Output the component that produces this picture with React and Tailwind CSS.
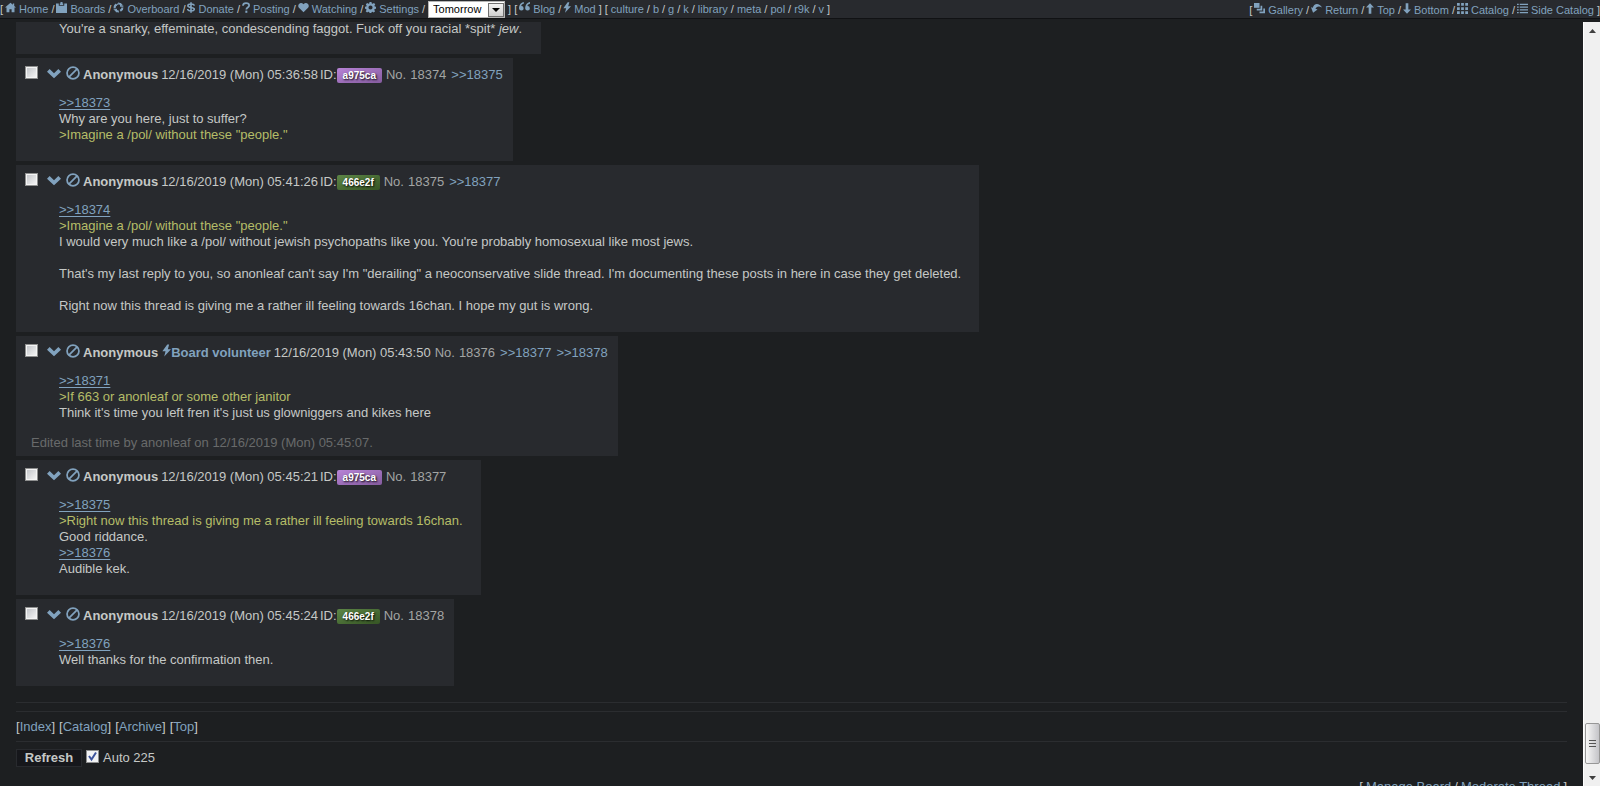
import React, { useState } from 'react';

const ICONS = {
  home: <path d="M8 1 0 8h2.200v7h4.200v-4.600h3.200V15h4.200V8H16l-2.600-2.300V2h-2v2z" />,
  boards: <path d="M0 2h4v3.500h8V2h4v14H0zM5.500 2h1V0h3v2h1v2.300h-5z" />,
  overboard: (
    <g fill="none" stroke="currentColor" strokeWidth="3">
      <path d="M2.500 9A5.600 5.600 0 0 1 5 3.300M7.500 2.300a5.600 5.600 0 0 1 5.300 2.900M13.700 8a5.600 5.600 0 0 1-3 5M8.500 13.800A5.600 5.600 0 0 1 3 11" />
      <path d="m3.500 6 4-3.500M11 1.500v4.500h4M14.500 10.500 10 12M5 15v-4.500H1" strokeWidth="1.500" />
    </g>
  ),
  donate: (
    <g fill="none" stroke="currentColor" strokeWidth="2.400">
      <path d="M13 5.200C12.600 3.500 10.800 2.700 8 2.700c-3 0-4.700 1-4.700 2.700C3.300 9.200 13 6.700 13 10.600c0 1.800-1.900 2.700-4.900 2.700-3.200 0-5-1-5.300-3M8 0v16" />
    </g>
  ),
  posting: (
    <>
      <path d="M3.500 5.200C3.500 2.800 5 1.500 8 1.500s4.700 1.400 4.700 3.500c0 3-4.200 2.900-4.200 6" fill="none" stroke="currentColor" strokeWidth="2.600" />
      <path d="M7 12.700h3V16H7z" />
    </>
  ),
  watching: <path d="M8 15 1.400 8.400C-2 4.500 3.500-1.500 8 3.200c4.500-4.700 10 1.300 6.600 5.200z" />,
  settings: (
    <path
      fillRule="evenodd"
      d="M6.600 0h2.800l.5 2.200 1.200.5L13 1.400l1.900 2-1.200 1.900.5 1.200 1.800.5v2.800l-2 .5-.5 1.200 1.200 1.800-2 2-1.800-1.200-1.200.5-.5 1.400H6.600l-.5-1.400-1.300-.5L3 15.300l-2-2 1.200-1.800-.5-1.200L0 9.800V7l1.900-.5.5-1.200L1.200 3.400l2-2L5 2.700l1.200-.5zM8 5a3 3 0 1 0 0 6 3 3 0 0 0 0-6z"
    />
  ),
  quote: (
    <path d="M7 0C3 .5 0 4 0 9.500a3.400 3.400 0 1 0 3.300-3.800C3.500 4 5 3 7 2.700zM16 0c-4 .5-7 4-7 9.500a3.400 3.400 0 1 0 3.300-3.800C12.500 4 14 3 16 2.700z" />
  ),
  bolt: <path d="M9 0 2.500 9h4.200L5 16l9-9.800H9.800L11.500 0z" />,
  gallery: (
    <>
      <path d="M0 0h8v7H0z" />
      <path d="M9.500 4H12v7H4V8.500h5.500zM13.500 8H16v7H8v-2.500h5.500z" />
    </>
  ),
  back: <path d="M0 6l3 8 6.500-4.500-3-1C7.500 5.500 11 3.500 16 6.500 12.500-.5 4-.5 2.600 6.800z" />,
  up: <path d="m8 0 6 6.500h-4V16H6V6.500H2z" />,
  down: <path d="m8 16 6-6.500h-4V0H6v9.500H2z" />,
  grid: <path d="M0 0h4v4H0zM6 0h4v4H6zM12 0h4v4h-4zM0 6h4v4H0zM6 6h4v4H6zM12 6h4v4h-4zM0 12h4v4H0zM6 12h4v4H6zM12 12h4v4h-4z" />,
  list: <path d="M0 1h2.500v2H0zM4 1h12v2H4zM0 5h2.500v2H0zM4 5h12v2H4zM0 9h2.500v2H0zM4 9h12v2H4zM0 13h2.500v2H0zM4 13h12v2H4z" />,
  menu: <path d="M0 6.500 3 3.500l5 4.700 5-4.700 3 3-8 7.500z" />,
  ban: (
    <g fill="none" stroke="currentColor" strokeWidth="2">
      <circle cx="8" cy="8" r="6.800" />
      <path d="M3.300 12.700 12.700 3.300" />
    </g>
  ),
};

// Narrow glyphs drop the empty columns on both sides
const NARROW = ['donate', 'posting', 'bolt', 'up', 'down'];

const Icon = ({ name, className }) => (
  <svg
    viewBox={NARROW.includes(name) ? '2 0 12 16' : '0 0 16 16'}
    fill="currentColor"
    aria-hidden="true"
    className={`shrink-0 text-[#81a2be] ${className}`}
  >
    {ICONS[name]}
  </svg>
);

const SITE_LINKS = [
  { icon: 'home', label: 'Home' },
  { icon: 'boards', label: 'Boards' },
  { icon: 'overboard', label: 'Overboard' },
  { icon: 'donate', label: 'Donate' },
  { icon: 'posting', label: 'Posting' },
  { icon: 'watching', label: 'Watching' },
  { icon: 'settings', label: 'Settings' },
];

const STAFF_LINKS = [
  { icon: 'quote', label: 'Blog' },
  { icon: 'bolt', label: 'Mod' },
];

const BOARD_LINKS = ['culture', 'b', 'g', 'k', 'library', 'meta', 'pol', 'r9k', 'v'].map((label) => ({ label }));

const THREAD_LINKS = [
  { icon: 'gallery', label: 'Gallery' },
  { icon: 'back', label: 'Return' },
  { icon: 'up', label: 'Top' },
  { icon: 'down', label: 'Bottom' },
  { icon: 'grid', label: 'Catalog' },
  { icon: 'list', label: 'Side Catalog' },
];

const LinkGroup = ({ links }) => (
  <>
    {links.map((link, i) => (
      <React.Fragment key={link.label}>
        {i > 0 && <span>/</span>}
        <a href="#" className={`flex items-center gap-[3px] text-[#81a2be] ${link.icon ? '-ml-px' : ''}`}>
          {link.icon && (
            <Icon name={link.icon} className={`-mt-[3px] h-[11px] ${NARROW.includes(link.icon) ? 'w-[8px]' : 'w-[11px]'}`} />
          )}
          {link.label}
        </a>
      </React.Fragment>
    ))}
  </>
);

const TopBar = () => (
  <header className="flex h-[19px] shrink-0 items-center justify-between border-b border-[#111214] bg-[#282a2e] text-[11px] whitespace-nowrap">
    <nav className="flex items-center gap-[3px]">
      <span>[</span>
      <LinkGroup links={SITE_LINKS} />
      <span>/</span>
      <span className="relative flex">
        <select
          aria-label="Theme"
          defaultValue="Tomorrow"
          className="h-[17px] w-[77px] appearance-none border border-[#b5b5b5] bg-white pl-[4px] text-[11px] leading-[14px] text-black"
        >
          <option>Tomorrow</option>
        </select>
        <span className="pointer-events-none absolute top-[2px] right-[1px] flex h-[14px] w-[16px] items-center justify-center border border-[#707070] bg-linear-to-b from-[#f2f2f2] to-[#cfcfcf]">
          <svg viewBox="0 0 8 4" className="h-[4px] w-[8px]" aria-hidden="true">
            <path d="M0 0h8L4 4z" />
          </svg>
        </span>
      </span>
      <span>]</span>
      <span>[</span>
      <LinkGroup links={STAFF_LINKS} />
      <span>]</span>
      <span>[</span>
      <LinkGroup links={BOARD_LINKS} />
      <span>]</span>
    </nav>
    <nav className="flex items-center gap-[3px] pt-[2px]">
      <span>[</span>
      <LinkGroup links={THREAD_LINKS} />
      <span>]</span>
    </nav>
  </header>
);

const ID_STYLES = {
  a975ca: 'from-[#b783d6] to-[#855c9f]',
  '466e2f': 'from-[#5d8647] to-[#365524]',
};

const POSTS = [
  {
    no: 18374,
    time: '12/16/2019 (Mon) 05:36:58',
    id: 'a975ca',
    replies: [18375],
    lines: [
      { quote: 18373 },
      { text: 'Why are you here, just to suffer?' },
      { green: '>Imagine a /pol/ without these "people."' },
    ],
  },
  {
    no: 18375,
    time: '12/16/2019 (Mon) 05:41:26',
    id: '466e2f',
    replies: [18377],
    lines: [
      { quote: 18374 },
      { green: '>Imagine a /pol/ without these "people."' },
      { text: "I would very much like a /pol/ without jewish psychopaths like you. You're probably homosexual like most jews." },
      {},
      { text: 'That\'s my last reply to you, so anonleaf can\'t say I\'m "derailing" a neoconservative slide thread. I\'m documenting these posts in here in case they get deleted.' },
      {},
      { text: 'Right now this thread is giving me a rather ill feeling towards 16chan. I hope my gut is wrong.' },
    ],
  },
  {
    no: 18376,
    time: '12/16/2019 (Mon) 05:43:50',
    role: 'Board volunteer',
    replies: [18377, 18378],
    lines: [
      { quote: 18371 },
      { green: '>If 663 or anonleaf or some other janitor' },
      { text: "Think it's time you left fren it's just us glowniggers and kikes here" },
    ],
    edited: 'Edited last time by anonleaf on 12/16/2019 (Mon) 05:45:07.',
  },
  {
    no: 18377,
    time: '12/16/2019 (Mon) 05:45:21',
    id: 'a975ca',
    replies: [],
    lines: [
      { quote: 18375 },
      { green: '>Right now this thread is giving me a rather ill feeling towards 16chan.' },
      { text: 'Good riddance.' },
      { quote: 18376 },
      { text: 'Audible kek.' },
    ],
  },
  {
    no: 18378,
    time: '12/16/2019 (Mon) 05:45:24',
    id: '466e2f',
    replies: [],
    lines: [{ quote: 18376 }, { text: 'Well thanks for the confirmation then.' }],
  },
];

const Line = ({ line }) => {
  if (line.quote) {
    return (
      <p>
        <a href="#" className="text-[#81a2be] underline underline-offset-2">
          {`>>${line.quote}`}
        </a>
      </p>
    );
  }
  if (line.green) return <p className="text-[#b5bd68]">{line.green}</p>;
  return <p className="min-h-[16px]">{line.text}</p>;
};

const Post = ({ post }) => (
  <article className="bg-[#282a2e]">
    <div className="flex h-[37px] items-start pt-[8px] pr-[10px] pl-[9px] whitespace-nowrap">
      <input
        type="checkbox"
        aria-label={`Select post ${post.no}`}
        className="h-[13px] w-[13px] shrink-0 appearance-none border-2 border-[#f4f4f4] bg-linear-to-br from-[#c4c6ca] to-[#f3f3f3] outline outline-1 -outline-offset-1 outline-[#8e8f8f]"
      />
      <Icon name="menu" className="ml-[9px] h-[14px] w-[14px]" />
      <Icon name="ban" className="ml-[5px] h-[14px] w-[14px]" />
      <div className="flex pt-px">
        <span className="ml-[3px] font-bold">Anonymous</span>
        {post.role && (
          <span className="ml-[4px] flex font-bold text-[#81a2be]">
            <Icon name="bolt" className="-mt-px h-[13px] w-[9px]" />
            {post.role}
          </span>
        )}
        <span className="ml-[3px]">{post.time}</span>
        {post.id && (
          <span className="ml-[2px] flex">
            ID:
            <span
              className={`mt-px h-[15px] rounded-[2px] bg-linear-to-br px-[6px] text-[10px] leading-[15px] font-bold text-white [text-shadow:1px_1px_2px_#000] ${ID_STYLES[post.id]}`}
            >
              {post.id}
            </span>
          </span>
        )}
        <a href="#" className="ml-[4px] text-[#a3a5a4]">No.</a>
        <a href="#" className="ml-[4px] text-[#a3a5a4]">{post.no}</a>
        {post.replies.map((reply) => (
          <a key={reply} href="#" className="ml-[5px] text-[#81a2be]">
            {`>>${reply}`}
          </a>
        ))}
      </div>
    </div>
    <div className={post.edited ? 'pr-[18px] pb-[14px] pl-[43px]' : 'pr-[18px] pb-[18px] pl-[43px]'}>
      {post.lines.map((line, i) => (
        <Line key={i} line={line} />
      ))}
    </div>
    {post.edited && <p className="px-[15px] pb-[5px] text-[#686a6b]">{post.edited}</p>}
  </article>
);

const ScrollBar = () => (
  <div aria-hidden="true" className="flex w-[17px] shrink-0 flex-col items-center border-l border-white bg-[#f0f0f0]">
    <svg viewBox="0 0 7 4" className="mt-[7px] h-[4px] w-[7px] text-[#404040]" fill="currentColor">
      <path d="M0 4h7L3.500 0z" />
    </svg>
    <div className="flex-1" />
    <div className="flex h-[41px] w-[15px] flex-col items-center justify-center gap-[2px] rounded-[2px] border border-[#979797] bg-linear-to-r from-[#f7f7f7] to-[#c4c4c8]">
      <div className="h-px w-[7px] bg-[#555]" />
      <div className="h-px w-[7px] bg-[#555]" />
      <div className="h-px w-[7px] bg-[#555]" />
    </div>
    <svg viewBox="0 0 7 4" className="mt-[12px] mb-[6px] h-[4px] w-[7px] text-[#404040]" fill="currentColor">
      <path d="M0 0h7L3.500 4z" />
    </svg>
  </div>
);

const ThreadFooter = () => {
  const [auto, setAuto] = useState(true);

  return (
    <footer>
      <hr className="mt-[16px] border-[#2b2d30]" />
      <hr className="mt-[8px] border-[#2b2d30]" />
      <nav className="flex h-[29px] items-center gap-[4px]">
        {['Index', 'Catalog', 'Archive', 'Top'].map((label) => (
          <span key={label}>
            [<a href="#" className="text-[#81a2be]">{label}</a>]
          </span>
        ))}
      </nav>
      <hr className="border-[#2b2d30]" />
      <div className="mt-[7px] flex items-center">
        <button type="button" className="h-[18px] w-[66px] border border-[#282a2e] bg-[#16171b] text-center leading-[16px] font-bold">
          Refresh
        </button>
        <label className="ml-[4px] flex items-center gap-[4px]">
          <span className="relative -mt-[4px] flex">
            <input
              type="checkbox"
              checked={auto}
              onChange={(e) => setAuto(e.target.checked)}
              className="h-[13px] w-[13px] appearance-none border border-[#8e8f8f] bg-[#f1f2f4]"
            />
            {auto && (
              <svg viewBox="0 0 13 13" className="pointer-events-none absolute inset-0" fill="none" stroke="#3c539c" strokeWidth="2">
                <path d="m3 6 2.500 3.500L10 2.500" />
              </svg>
            )}
          </span>
          Auto 225
        </label>
      </div>
      <div className="mt-[12px] flex justify-end gap-[3px]">
        <span>[</span>
        <a href="#" className="text-[#81a2be]">Manage Board</a>
        <span>/</span>
        <a href="#" className="text-[#81a2be]">Moderate Thread</a>
        <span>]</span>
      </div>
    </footer>
  );
};

const App = () => (
  <div className="flex h-screen flex-col overflow-hidden bg-[#1d1f21] font-['Liberation_Sans',Arial,sans-serif] text-[13px] leading-[16px] text-[#c5c8c6]">
    <TopBar />
    <div className="flex min-h-0 flex-1 pt-[3px]">
      <main className="min-w-0 flex-1 overflow-hidden px-[16px]">
        <div className="flex flex-col items-start gap-[4px]">
          <article className="bg-[#282a2e] pr-[19px] pb-[18px] pl-[43px] leading-[14px]">
            <p>
              You're a snarky, effeminate, condescending faggot. Fuck off you racial *spit* <em>jew</em>.
            </p>
          </article>
          {POSTS.map((post) => (
            <Post key={post.no} post={post} />
          ))}
        </div>
        <ThreadFooter />
      </main>
      <ScrollBar />
    </div>
  </div>
);

export default App;
